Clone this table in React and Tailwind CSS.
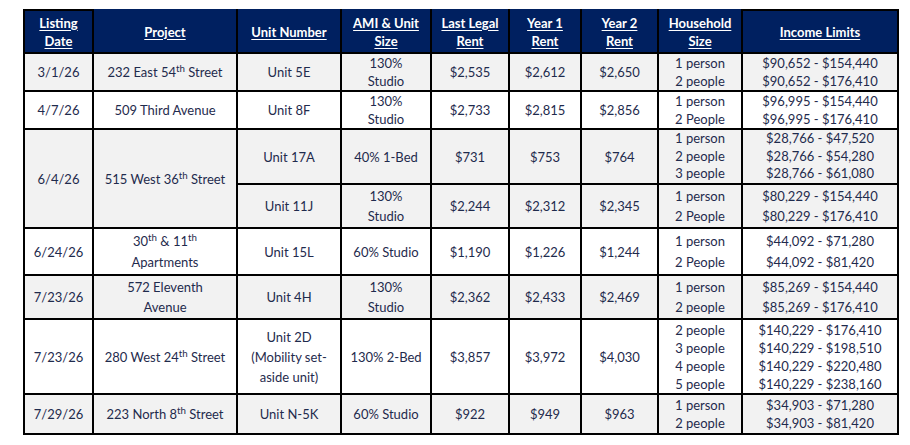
import React from "react";

const Lines = ({ items, lh = "leading-[18px]" }) => (
  <div>
    {items.map((t, i) => (
      <div key={i} className={lh}>
        {t}
      </div>
    ))}
  </div>
);

const Th = ({ children, first, last }) => (
  <th
    className={
      "border-2 border-black font-bold text-white align-middle text-center px-1 " +
      (first || last ? "" : "border-t-[#002060]")
    }
  >
    <div className="underline underline-offset-2 decoration-1 leading-[18px]">{children}</div>
  </th>
);

const Td = ({ children, className = "", ...rest }) => (
  <td
    className={"border-2 border-black align-middle text-center px-1 leading-[18px] " + className}
    {...rest}
  >
    {children}
  </td>
);

export default function App() {
  const gray = "bg-[#f2f2f2]";
  return (
    <div className="w-[910px] h-[445px] bg-white pt-[9px] pl-[23px] text-[13px] text-[#1f2b4d] font-['Lato','Open_Sans',sans-serif]">
      <table className="table-fixed border-collapse w-[874px]">
        <colgroup>
          <col className="w-[69px]" />
          <col className="w-[144px]" />
          <col className="w-[104px]" />
          <col className="w-[90px]" />
          <col className="w-[78px]" />
          <col className="w-[72px]" />
          <col className="w-[77px]" />
          <col className="w-[84px]" />
          <col className="w-[156px]" />
        </colgroup>
        <thead>
          <tr className="h-[43px] bg-[#002060]">
            <Th first>
              Listing
              <br />
              Date
            </Th>
            <Th>Project</Th>
            <Th>Unit Number</Th>
            <Th>
              AMI &amp; Unit
              <br />
              Size
            </Th>
            <Th>
              Last Legal
              <br />
              Rent
            </Th>
            <Th>
              Year 1
              <br />
              Rent
            </Th>
            <Th>
              Year 2
              <br />
              Rent
            </Th>
            <Th>
              Household
              <br />
              Size
            </Th>
            <Th last>Income Limits</Th>
          </tr>
        </thead>
        <tbody>
          <tr className={"h-[38px] " + gray}>
            <Td>3/1/26</Td>
            <Td>
              232 East 54<sup>th</sup> Street
            </Td>
            <Td>Unit 5E</Td>
            <Td>
              <Lines items={["130%", "Studio"]} />
            </Td>
            <Td>$2,535</Td>
            <Td>$2,612</Td>
            <Td>$2,650</Td>
            <Td>
              <Lines items={["1 person", "2 people"]} />
            </Td>
            <Td>
              <Lines items={["$90,652 - $154,440", "$90,652 - $176,410"]} />
            </Td>
          </tr>
          <tr className="h-[38px] bg-white">
            <Td>4/7/26</Td>
            <Td>509 Third Avenue</Td>
            <Td>Unit 8F</Td>
            <Td>
              <Lines items={["130%", "Studio"]} />
            </Td>
            <Td>$2,733</Td>
            <Td>$2,815</Td>
            <Td>$2,856</Td>
            <Td>
              <Lines items={["1 person", "2 People"]} />
            </Td>
            <Td>
              <Lines items={["$96,995 - $154,440", "$96,995 - $176,410"]} />
            </Td>
          </tr>
          <tr className={"h-[55px] " + gray}>
            <Td rowSpan={2}>6/4/26</Td>
            <Td rowSpan={2}>
              515 West 36<sup>th</sup> Street
            </Td>
            <Td>Unit 17A</Td>
            <Td>40% 1-Bed</Td>
            <Td>$731</Td>
            <Td>$753</Td>
            <Td>$764</Td>
            <Td>
              <Lines items={["1 person", "2 people", "3 people"]} lh="leading-[17.5px]" />
            </Td>
            <Td>
              <Lines
                lh="leading-[17.5px]"
                items={["$28,766 - $47,520", "$28,766 - $54,280", "$28,766 - $61,080"]}
              />
            </Td>
          </tr>
          <tr className={"h-[44px] " + gray}>
            <Td>Unit 11J</Td>
            <Td>
              <Lines items={["130%", "Studio"]} lh="leading-[20px]" />
            </Td>
            <Td>$2,244</Td>
            <Td>$2,312</Td>
            <Td>$2,345</Td>
            <Td>
              <Lines items={["1 person", "2 People"]} lh="leading-[20px]" />
            </Td>
            <Td>
              <Lines items={["$80,229 - $154,440", "$80,229 - $176,410"]} lh="leading-[20px]" />
            </Td>
          </tr>
          <tr className="h-[47px] bg-white">
            <Td>6/24/26</Td>
            <Td>
              <Lines
                lh="leading-[21px]"
                items={[
                  <>
                    30<sup>th</sup> &amp; 11<sup>th</sup>
                  </>,
                  "Apartments",
                ]}
              />
            </Td>
            <Td>Unit 15L</Td>
            <Td>60% Studio</Td>
            <Td>$1,190</Td>
            <Td>$1,226</Td>
            <Td>$1,244</Td>
            <Td>
              <Lines items={["1 person", "2 People"]} lh="leading-[21px]" />
            </Td>
            <Td>
              <Lines items={["$44,092 - $71,280", "$44,092 - $81,420"]} lh="leading-[21px]" />
            </Td>
          </tr>
          <tr className={"h-[44px] " + gray}>
            <Td>7/23/26</Td>
            <Td>
              <Lines items={["572 Eleventh", "Avenue"]} lh="leading-[20px]" />
            </Td>
            <Td>Unit 4H</Td>
            <Td>
              <Lines items={["130%", "Studio"]} lh="leading-[20px]" />
            </Td>
            <Td>$2,362</Td>
            <Td>$2,433</Td>
            <Td>$2,469</Td>
            <Td>
              <Lines items={["1 person", "2 people"]} lh="leading-[20px]" />
            </Td>
            <Td>
              <Lines items={["$85,269 - $154,440", "$85,269 - $176,410"]} lh="leading-[20px]" />
            </Td>
          </tr>
          <tr className="h-[75px] bg-white">
            <Td>7/23/26</Td>
            <Td>
              280 West 24<sup>th</sup> Street
            </Td>
            <Td>
              <Lines
                items={["Unit 2D", "(Mobility set-", "aside unit)"]}
                lh="leading-[20px]"
              />
            </Td>
            <Td>130% 2-Bed</Td>
            <Td>$3,857</Td>
            <Td>$3,972</Td>
            <Td>$4,030</Td>
            <Td>
              <Lines items={["2 people", "3 people", "4 people", "5 people"]} />
            </Td>
            <Td>
              <Lines
                items={[
                  "$140,229 - $176,410",
                  "$140,229 - $198,510",
                  "$140,229 - $220,480",
                  "$140,229 - $238,160",
                ]}
              />
            </Td>
          </tr>
          <tr className={"h-[40px] " + gray}>
            <Td>7/29/26</Td>
            <Td>
              223 North 8<sup>th</sup> Street
            </Td>
            <Td>Unit N-5K</Td>
            <Td>60% Studio</Td>
            <Td>$922</Td>
            <Td>$949</Td>
            <Td>$963</Td>
            <Td>
              <Lines items={["1 person", "2 people"]} lh="leading-[18px]" />
            </Td>
            <Td>
              <Lines items={["$34,903 - $71,280", "$34,903 - $81,420"]} lh="leading-[18px]" />
            </Td>
          </tr>
        </tbody>
      </table>
    </div>
  );
}
